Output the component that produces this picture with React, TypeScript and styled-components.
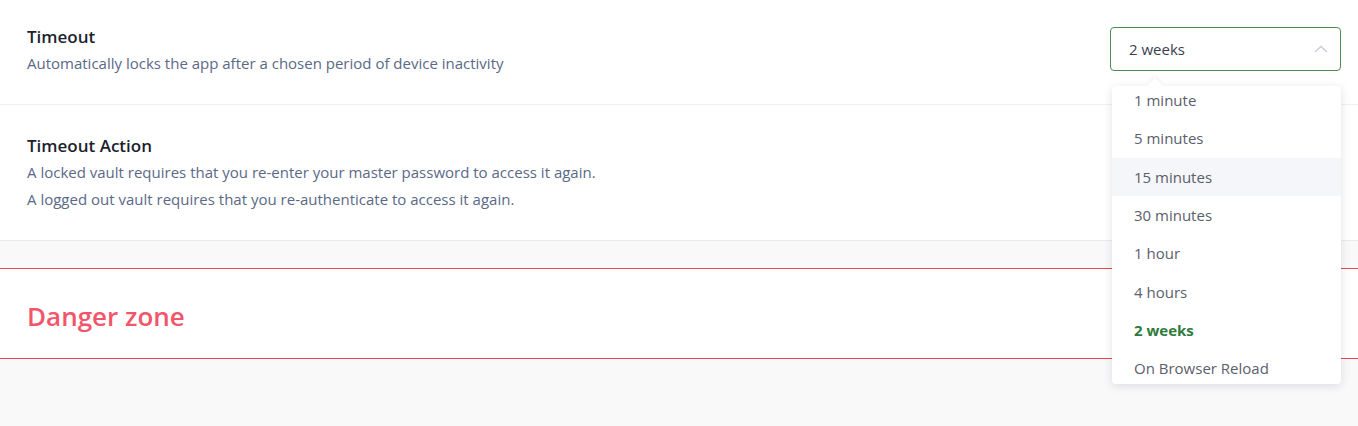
import { useState } from "react"
import styled, { createGlobalStyle } from "styled-components"

const GlobalStyle = createGlobalStyle`
   html, body {
      margin: 0;
      padding: 0;
      background: #f9f9fa;
      font-family: "Open Sans", "Noto Sans", sans-serif;
   }
`

const Page = styled.div`
   height: 426px;
   overflow: hidden;
`

const Card = styled.section`
   background: #fff;
   border-bottom: 1px solid #ebebf0;
`

const Row = styled.div<{ $top: number }>`
   display: flex;
   justify-content: space-between;
   align-items: flex-start;
   padding: ${p => p.$top}px 17px 27px 27px;
   border-bottom: 1px solid #efeff3;

   &:last-child {
      border-bottom: none;
   }
`

const Info = styled.div`
   display: flex;
   flex-direction: column;
`

const Title = styled.h3`
   margin: 0 0 2px;
   font-size: 17px;
   line-height: 22px;
   font-weight: 600;
   color: #1c1f2e;
`

const Desc = styled.p`
   margin: 0;
   font-size: 15px;
   line-height: 27px;
   color: #5a6987;
`

const SelectWrap = styled.div`
   position: relative;
   margin-top: 1px;
`

const SelectBox = styled.button`
   display: flex;
   align-items: center;
   justify-content: space-between;
   width: 231px;
   height: 44px;
   padding: 0 12px 0 18px;
   background: #fff;
   border: 1px solid #4f8a53;
   border-radius: 4px;
   font-family: inherit;
   font-size: 15px;
   color: #3a3f4f;
   cursor: pointer;
`

const Menu = styled.div`
   position: absolute;
   top: 59px;
   left: 2px;
   width: 229px;
   height: 298px;
   background: #fff;
   border-radius: 4px;
   box-shadow: 0 2px 10px rgba(20, 30, 50, 0.13);
   z-index: 10;

   &::before {
      content: "";
      position: absolute;
      top: -6px;
      left: 38px;
      width: 10px;
      height: 10px;
      background: #fff;
      transform: rotate(45deg);
      box-shadow: -2px -2px 4px rgba(20, 30, 50, 0.05);
   }
`

const MenuList = styled.ul`
   position: relative;
   list-style: none;
   margin: 0;
   padding: 0;
   height: 100%;
   overflow: hidden;
   border-radius: 4px;
`

const Inner = styled.div`
   margin-top: -5px;
`

const Item = styled.li<{ $selected?: boolean; $hover?: boolean }>`
   height: 38.3px;
   display: flex;
   align-items: center;
   padding-left: 22px;
   font-size: 15px;
   color: ${p => (p.$selected ? "#2e7a3a" : "#5b5e6b")};
   font-weight: ${p => (p.$selected ? 700 : 400)};
   background: ${p => (p.$hover ? "#f5f6f9" : "transparent")};
   cursor: pointer;
`

const Gap = styled.div`
   height: 27px;
`

const Danger = styled.section`
   background: #fff;
   border-top: 1px solid #e8484d;
   border-bottom: 1px solid #e8484d;
   height: 89px;
   display: flex;
   align-items: center;
   padding: 0 27px;
`

const DangerTitle = styled.h2`
   margin: 4px 0 0;
   font-size: 26px;
   font-weight: 600;
   color: #f2566b;
`

const options = [
   "1 minute",
   "5 minutes",
   "15 minutes",
   "30 minutes",
   "1 hour",
   "4 hours",
   "2 weeks",
   "On Browser Reload",
]

const Chevron = () => (
   <svg width="14" height="8" viewBox="0 0 14 8" fill="none">
      <path d="M1 7L7 1.5L13 7" stroke="#c9ccd4" strokeWidth="1.3" />
   </svg>
)

export default function App() {
   const [value, setValue] = useState("2 weeks")
   const [open, setOpen] = useState(true)

   return (
      <Page>
         <GlobalStyle />
         <Card>
            <Row $top={26}>
               <Info>
                  <Title>Timeout</Title>
                  <Desc>Automatically locks the app after a chosen period of device inactivity</Desc>
               </Info>
               <SelectWrap>
                  <SelectBox onClick={() => setOpen(o => !o)}>
                     {value}
                     <Chevron />
                  </SelectBox>
                  {open && (
                     <Menu>
                        <MenuList>
                           <Inner>
                              {options.map(o => (
                                 <Item
                                    key={o}
                                    $selected={o === value}
                                    $hover={o === "15 minutes"}
                                    onClick={() => setValue(o)}
                                 >
                                    {o}
                                 </Item>
                              ))}
                           </Inner>
                        </MenuList>
                     </Menu>
                  )}
               </SelectWrap>
            </Row>
            <Row $top={30}>
               <Info>
                  <Title>Timeout Action</Title>
                  <Desc>
                     A locked vault requires that you re-enter your master password to access it again.
                     <br />
                     A logged out vault requires that you re-authenticate to access it again.
                  </Desc>
               </Info>
            </Row>
         </Card>
         <Gap />
         <Danger>
            <DangerTitle>Danger zone</DangerTitle>
         </Danger>
      </Page>
   )
}
